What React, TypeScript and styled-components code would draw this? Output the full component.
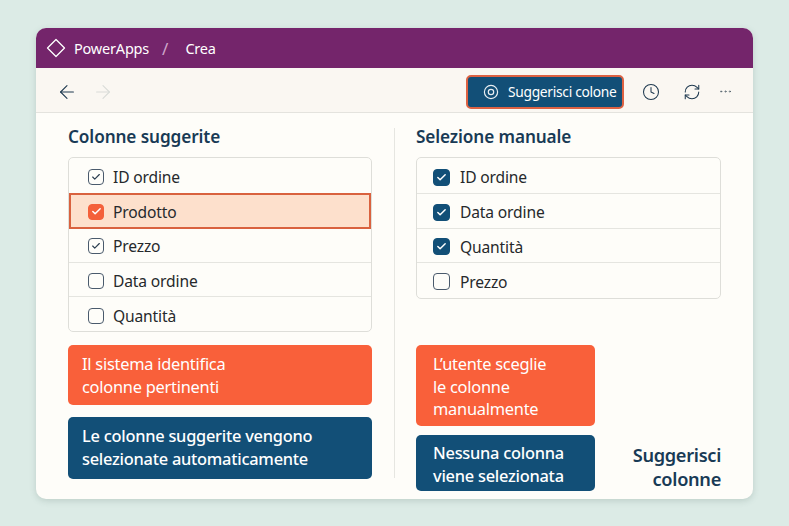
import React from 'react'
import styled, { createGlobalStyle } from 'styled-components'
import { ArrowLeft, ArrowRight, Clock, RefreshCw, Ellipsis, Check } from 'lucide-react'

const GlobalStyle = createGlobalStyle`
    html, body {
        margin: 0;
        padding: 0;
        background: #dcebe6;
        font-family: 'Noto Sans', 'Open Sans', sans-serif;
    }
`

type BoxKind = 'outline' | 'accent' | 'filled' | 'empty'

const suggested: { label: string; box: BoxKind; active?: boolean }[] = [
    { label: 'ID ordine', box: 'outline' },
    { label: 'Prodotto', box: 'accent', active: true },
    { label: 'Prezzo', box: 'outline' },
    { label: 'Data ordine', box: 'empty' },
    { label: 'Quantità', box: 'empty' },
]

const manual: { label: string; box: BoxKind }[] = [
    { label: 'ID ordine', box: 'filled' },
    { label: 'Data ordine', box: 'filled' },
    { label: 'Quantità', box: 'filled' },
    { label: 'Prezzo', box: 'empty' },
]

const CheckBox = ({ kind, size }: { kind: BoxKind; size: number }) => (
    <Box $kind={kind} $size={size}>
        {kind !== 'empty' && (
            <Check
                size={kind === 'outline' ? 10 : 11}
                strokeWidth={kind === 'outline' ? 2.8 : 3.2}
                color={kind === 'outline' ? '#2c3e50' : '#ffffff'}
            />
        )}
    </Box>
)

export default function App() {
    return (
        <Page>
            <GlobalStyle />
            <Card>
                <TitleBar>
                    <svg width="20" height="20" viewBox="0 0 20 20" fill="none">
                        <path
                            d="M10 1.5 18.5 10 10 18.5 1.5 10Z"
                            stroke="#ffffff"
                            strokeWidth="1.3"
                            strokeLinejoin="round"
                        />
                    </svg>
                    <AppName>PowerApps</AppName>
                    <Slash>/</Slash>
                    <AppName>Crea</AppName>
                </TitleBar>
                <Toolbar>
                    <NavGroup>
                        <ArrowLeft size={22} strokeWidth={1.2} color="#1f3a50" />
                        <ArrowRight size={22} strokeWidth={1.2} color="#d9dcd8" />
                    </NavGroup>
                    <SuggestButton>
                        <svg width="16" height="16" viewBox="0 0 16 16" fill="none">
                            <circle cx="8" cy="8" r="6.6" stroke="#e8eef2" strokeWidth="1.2" />
                            <circle cx="8" cy="8" r="2.7" stroke="#e8eef2" strokeWidth="1.2" />
                        </svg>
                        Suggerisci colone
                    </SuggestButton>
                    <ToolIcons>
                        <Clock size={18} strokeWidth={1.4} color="#1f3a50" />
                        <RefreshCw size={18} strokeWidth={1.4} color="#1f3a50" />
                        <Ellipsis size={15} strokeWidth={1.2} color="#52606b" />
                    </ToolIcons>
                </Toolbar>
                <Content>
                    <Column>
                        <Heading>Colonne suggerite</Heading>
                        <List $h={175} $rows="repeat(5, 1fr)">
                            {suggested.map((row) => (
                                <Row key={row.label} $active={row.active} $inset={19} $gap={9}>
                                    <CheckBox kind={row.box} size={16} />
                                    {row.label}
                                </Row>
                            ))}
                        </List>
                        <Notes>
                            <Note $tone="orange" $h={60}>
                                Il sistema identifica
                                <br />
                                colonne pertinenti
                            </Note>
                            <Note $tone="blue" $h={62}>
                                Le colonne suggerite vengono
                                <br />
                                selezionate automaticamente
                            </Note>
                        </Notes>
                    </Column>
                    <Divider />
                    <Column>
                        <Heading>Selezione manuale</Heading>
                        <List $h={142} $rows="35px 34.5px 34px 1fr">
                            {manual.map((row) => (
                                <Row key={row.label} $inset={16} $gap={10}>
                                    <CheckBox kind={row.box} size={17} />
                                    {row.label}
                                </Row>
                            ))}
                        </List>
                        <ManualBottom>
                            <ManualNotes>
                                <Note $tone="orange" $h={81} $left={17}>
                                    L’utente sceglie
                                    <br />
                                    le colonne
                                    <br />
                                    manualmente
                                </Note>
                                <Note $tone="blue" $h={56} $top={7} $left={17}>
                                    Nessuna colonna
                                    <br />
                                    viene selezionata
                                </Note>
                            </ManualNotes>
                            <Caption>
                                Suggerisci
                                <br />
                                colonne
                            </Caption>
                        </ManualBottom>
                    </Column>
                </Content>
            </Card>
        </Page>
    )
}

const Page = styled.div`
    width: 789px;
    height: 526px;
    padding: 28px 36px 27px;
    box-sizing: border-box;
    overflow: hidden;
`

const Card = styled.div`
    width: 717px;
    height: 471px;
    background: #fefdf9;
    border-radius: 10px;
    overflow: hidden;
    box-shadow: 0 2px 6px rgba(80, 110, 100, 0.22);
`

const TitleBar = styled.div`
    height: 40px;
    padding-left: 10px;
    display: flex;
    align-items: center;
    background: #74256b;
    color: #ffffff;
`

const AppName = styled.span`
    font-size: 14.5px;
    margin-left: 8px;
    letter-spacing: -0.2px;
`

const Slash = styled.span`
    font-size: 17px;
    color: #cfa6ca;
    margin: 0 9px 0 13px;
`

const Toolbar = styled.div`
    height: 45px;
    box-sizing: border-box;
    padding: 3px 20px 0;
    display: flex;
    align-items: center;
    background: #faf7f2;
    border-bottom: 1px solid #e4e3de;
`

const NavGroup = styled.div`
    display: flex;
    gap: 14px;
    margin-right: auto;
`

const SuggestButton = styled.div`
    width: 158px;
    height: 34px;
    box-sizing: border-box;
    padding-left: 15px;
    display: flex;
    align-items: center;
    gap: 9px;
    background: #124f77;
    border: 2px solid #dd6243;
    border-radius: 5px;
    color: #ffffff;
    font-size: 13.8px;
    letter-spacing: -0.3px;
    white-space: nowrap;
`

const ToolIcons = styled.div`
    margin-left: 18px;
    display: grid;
    grid-template-columns: 41px 35px 15px;
    align-items: center;
`

const Content = styled.div`
    display: grid;
    grid-template-columns: 304px 44px 305px;
    padding: 15px 0 0 32px;
`

const Column = styled.div`
    display: flex;
    flex-direction: column;
`

const Divider = styled.div`
    width: 1px;
    height: 350px;
    margin-left: 22px;
    background: #e6e6e1;
`

const Heading = styled.div`
    height: 29px;
    color: #183a55;
    font-size: 17.2px;
    font-weight: 600;
    line-height: 18px;
    letter-spacing: -0.1px;
`

const List = styled.div<{ $h: number; $rows: string }>`
    height: ${(p) => p.$h}px;
    box-sizing: border-box;
    display: grid;
    grid-template-rows: ${(p) => p.$rows};
    border: 1px solid #deded9;
    border-radius: 5px;
    overflow: hidden;
`

const Row = styled.div<{ $active?: boolean; $inset: number; $gap: number }>`
    position: relative;
    box-sizing: border-box;
    padding: ${(p) => (p.$active ? 4 : 3)}px 0 0 ${(p) => p.$inset}px;
    display: flex;
    align-items: center;
    gap: ${(p) => p.$gap}px;
    color: #26292c;
    font-size: 15.6px;
    letter-spacing: -0.15px;
    background: ${(p) => (p.$active ? '#fde0cc' : 'transparent')};
    z-index: ${(p) => (p.$active ? 1 : 0)};

    &:not(:first-child) {
        border-top: ${(p) => (p.$active ? 'none' : '1px solid #e5e5e0')};
    }

    ${(p) =>
        p.$active &&
        `
        &::after {
            content: '';
            position: absolute;
            top: 0;
            bottom: -2px;
            left: 0;
            right: 0;
            border: 2px solid #d9623f;
        }
    `}
`

const Box = styled.span<{ $kind: BoxKind; $size: number }>`
    width: ${(p) => p.$size}px;
    height: ${(p) => p.$size}px;
    flex: none;
    display: flex;
    align-items: center;
    justify-content: center;
    box-sizing: border-box;
    border-radius: 4px;
    border: ${(p) =>
        p.$kind === 'accent'
            ? '1px solid #f4603a'
            : p.$kind === 'filled'
              ? '1px solid #124f77'
              : '1.4px solid #4a5a6c'};
    background: ${(p) =>
        p.$kind === 'accent' ? '#f4603a' : p.$kind === 'filled' ? '#124f77' : 'transparent'};
`

const Notes = styled.div`
    margin-top: 13px;
    display: flex;
    flex-direction: column;
    gap: 12px;
`

const Note = styled.div<{ $tone: 'orange' | 'blue'; $h: number; $top?: number; $left?: number }>`
    height: ${(p) => p.$h}px;
    box-sizing: border-box;
    padding: ${(p) => p.$top ?? 8}px 0 0 ${(p) => p.$left ?? 14}px;
    border-radius: 5px;
    color: #ffffff;
    font-size: 16.4px;
    line-height: 22.5px;
    letter-spacing: -0.25px;
    white-space: nowrap;
    background: ${(p) => (p.$tone === 'orange' ? '#f9603a' : '#124f77')};
    font-weight: ${(p) => (p.$tone === 'orange' ? 400 : 500)};
`

const ManualBottom = styled.div`
    margin-top: 46px;
    display: flex;
    justify-content: space-between;
    align-items: flex-end;
`

const ManualNotes = styled.div`
    width: 179px;
    display: flex;
    flex-direction: column;
    gap: 9px;
`

const Caption = styled.div`
    color: #183a55;
    font-size: 18.2px;
    font-weight: 600;
    line-height: 23.5px;
    text-align: right;
    letter-spacing: -0.3px;
`
